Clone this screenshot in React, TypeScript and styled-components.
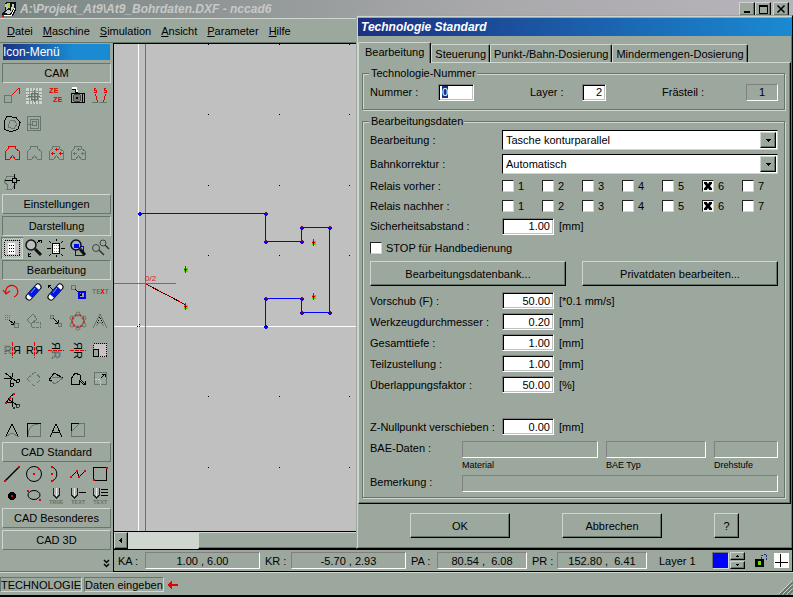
import React, { useEffect, useRef } from "react";
import styled, { createGlobalStyle, css } from "styled-components";

const c = {
  face: "#9ca89e",
  light: "#cfd6d0",
  shade: "#67766c",
  gray: "#808080",
  canvas: "#c0c0c0",
  red: "#e80000",
  blue: "#0000ff",
  navy: "#1c3080",
  sky: "#1a8ad2",
};

const Global = createGlobalStyle`
  *, *::before, *::after { box-sizing: border-box; }
  body { margin: 0; background: ${c.face}; }
  body, button, input, select { font: 11px/14px "Liberation Sans", Arial, sans-serif; color: #000; }
  svg { display: block; }
`;

const raised = css`
  border: 1px solid;
  border-color: ${c.light} #000 #000 ${c.light};
  box-shadow: inset -1px -1px 0 ${c.shade};
`;

/* ---------- main window ---------- */
const Window = styled.div`
  position: relative;
  display: flex;
  flex-direction: column;
  min-height: 100vh;
  background: ${c.face};
`;
const TitleBar = styled.header`
  display: flex;
  align-items: center;
  height: 18px;
  padding: 0 4px 0 1px;
  gap: 3px;
  background: linear-gradient(90deg, #7b8784, #a8a8aa 60%, #b8b3bb);
`;
const TitleText = styled.h1`
  flex: 1;
  margin: 0;
  font: italic bold 12px/16px "Liberation Sans", Arial, sans-serif;
  color: #c6c8c7;
`;
const CaptionButtons = styled.div`
  display: flex;
`;
const CaptionButton = styled.button<{ $gap?: boolean }>`
  ${raised}
  width: 16px;
  height: 14px;
  padding: 0;
  display: grid;
  place-items: center;
  background: ${c.face};
  margin-left: ${(p) => (p.$gap ? "2px" : "0")};
`;
const MenuBar = styled.nav`
  display: flex;
  align-items: center;
  gap: 10px;
  height: 24px;
  padding: 0 7px;
  border-top: 1px solid ${c.light};
`;
const MenuItem = styled.button`
  border: 0;
  padding: 0;
  background: none;
`;
const Body = styled.div`
  flex: 1;
  display: flex;
  border-top: 1px solid ${c.shade};
`;

/* ---------- icon sidebar ---------- */
const Sidebar = styled.aside`
  display: flex;
  flex-direction: column;
  flex: 0 0 113px;
  padding: 1px 2px 3px 1px;
  border-right: 1px solid ${c.shade};
  border-bottom: 1px solid ${c.shade};
`;
const SidebarTitle = styled.h2`
  margin: 0 1px 2px 2px;
  padding: 0;
  font: 12px/16px "Liberation Sans", Arial, sans-serif;
  color: #fff;
  background: linear-gradient(90deg, ${c.navy}, ${c.sky} 65%);
`;
const SectionButton = styled.button<{ $open?: boolean }>`
  height: 20px;
  margin: 1px 0 1px 1px;
  padding: 0;
  background: ${c.face};
  border: 1px solid;
  border-color: ${(p) =>
    p.$open ? `${c.shade} ${c.light} ${c.light} ${c.shade}` : `${c.light} ${c.shade} ${c.shade} ${c.light}`};
`;
const IconGroup = styled.div`
  display: flex;
  flex-direction: column;
  gap: 7px;
`;
const IconGrid = styled.div`
  display: grid;
  grid-template-columns: repeat(5, 22px);
`;
const IconButton = styled.button<{ $pressed?: boolean }>`
  width: 22px;
  height: 22px;
  padding: 0;
  border: 0;
  background: none;
  ${(p) =>
    p.$pressed &&
    css`
      background: repeating-conic-gradient(${c.light} 0 25%, ${c.face} 0 50%) 0 0 / 2px 2px;
      box-shadow: inset 1px 1px 0 ${c.shade}, inset -1px -1px 0 ${c.light};
    `}
`;
const MoreButton = styled.button`
  align-self: flex-end;
  margin-top: auto;
  padding: 0;
  border: 0;
  background: none;
`;

/* ---------- drawing area ---------- */
const Main = styled.main`
  flex: 1;
  min-width: 0;
  display: flex;
  flex-direction: column;
  margin-left: -1px;
  border-left: 1px solid #000;
  border-top: 1px solid #000;
`;
const Canvas = styled.div`
  flex: 1;
  background: ${c.canvas};
  display: grid;
  overflow: hidden;
`;
const ScrollBar = styled.div`
  display: flex;
  height: 18px;
  border-top: 1px solid #000;
  background: ${c.light};
`;
const ScrollArrow = styled.button`
  ${raised}
  width: 14px;
  padding: 0;
  display: grid;
  place-items: center;
  background: ${c.face};
`;
const ScrollThumb = styled.div`
  ${raised}
  flex: 1;
  margin-left: 70px;
  background: ${c.face};
`;
const CoordBar = styled.div`
  display: flex;
  align-items: center;
  height: 23px;
  padding: 0 3px 0 4px;
  border: solid #000;
  border-width: 1px 1px 1px 0;
`;
const CoordLabel = styled.span<{ $w: number }>`
  width: ${(p) => p.$w}px;
  white-space: nowrap;
`;
const CoordValue = styled.output<{ $w: number }>`
  width: ${(p) => p.$w}px;
  height: 17px;
  margin-right: 5px;
  text-align: center;
  white-space: pre;
  line-height: 16px;
  border: 1px solid;
  border-color: ${c.gray} #fff #fff ${c.gray};
`;
const LayerName = styled.span`
  flex: 1;
  padding-left: 7px;
`;
const Swatch = styled.button`
  width: 17px;
  height: 17px;
  padding: 0;
  background: ${c.blue};
  border: 1px solid;
  border-color: ${c.shade} ${c.light} ${c.light} ${c.shade};
`;
const Spinner = styled.div`
  display: grid;
  gap: 1px;
  margin: 0 3px 0 1px;
`;
const SpinButton = styled.button`
  ${raised}
  width: 15px;
  height: 8px;
  padding: 0;
  display: grid;
  place-items: center;
  background: ${c.face};
`;
const ToolButton = styled.button`
  padding: 0;
  border: 0;
  background: none;
  margin-left: 6px;
`;
const StatusBar = styled.footer`
  display: flex;
  align-items: center;
  gap: 2px;
  height: 25px;
  border-top: 1px solid ${c.light};
  border-bottom: 2px solid #000;
`;
const StatusCell = styled.span`
  height: 15px;
  line-height: 14px;
  border: 1px solid;
  border-color: ${c.shade} ${c.light} ${c.light} ${c.shade};
`;
const Grip = styled.span`
  margin-left: auto;
  align-self: flex-end;
`;

/* ---------- dialog ---------- */
const Dialog = styled.section`
  position: absolute;
  top: 15px;
  left: 356px;
  right: 0;
  padding: 1px;
  background: ${c.face};
  border: 1px solid;
  border-color: ${c.face} #000 #000 ${c.face};
  box-shadow: inset 1px 1px 0 ${c.light}, inset -1px -1px 0 ${c.shade};
`;
const DialogTitle = styled.h2`
  margin: 1px 0 0;
  padding: 0 3px;
  font: italic bold 12px/18px "Liberation Sans", Arial, sans-serif;
  color: #fff;
  background: linear-gradient(90deg, ${c.navy}, ${c.sky});
`;
const Tabs = styled.div`
  display: flex;
  align-items: flex-end;
  height: 26px;
  padding-top: 5px;
`;
const Tab = styled.button<{ $active?: boolean }>`
  height: ${(p) => (p.$active ? 21 : 18)}px;
  padding: 0 ${(p) => (p.$active ? 6 : 3)}px ${(p) => (p.$active ? 3 : 0)}px;
  white-space: nowrap;
  background: ${c.face};
  border: solid;
  border-width: 1px 1px 0 1px;
  border-color: ${c.light} #000 ${c.light} ${c.light};
  border-radius: 2px 2px 0 0;
  box-shadow: inset -1px 0 0 ${c.shade};
  margin-bottom: ${(p) => (p.$active ? "-1px" : "0")};
`;
const TabPanel = styled.div`
  ${raised}
  padding: 3px 5px 5px 3px;
`;
const Group = styled.fieldset<{ $last?: boolean }>`
  min-width: 0;
  margin: 0 0 ${(p) => (p.$last ? 0 : 4)}px;
  padding: 0 6px 5px 7px;
  border: 1px solid ${c.shade};
  box-shadow: 1px 1px 0 ${c.light}, inset 1px 1px 0 ${c.light};
`;
const Legend = styled.legend`
  margin-left: -1px;
  padding: 0 1px 0 2px;
  line-height: 14px;
  background: ${c.face};
`;
const NumberRow = styled.div`
  display: grid;
  grid-template-columns: 68px 92px 52px 80px 1fr 32px;
  align-items: center;
  height: 24px;
`;
const Row = styled.div<{ $h: number }>`
  display: grid;
  grid-template-columns: 132px minmax(0, 1fr);
  align-items: center;
  height: ${(p) => p.$h}px;
`;
const Inline = styled.div`
  display: flex;
  align-items: center;
  gap: 5px;
`;
const Field = styled.input<{ $w: number }>`
  width: ${(p) => p.$w}px;
  height: 17px;
  padding: 0 3px;
  background: #fff;
  border: 1px solid;
  border-color: ${c.gray} #fff #fff ${c.gray};
  box-shadow: inset 1px 1px 0 #000, inset -1px -1px 0 ${c.canvas};
  text-align: right;
  outline: 0;
  border-radius: 0;
  &::selection {
    background: ${c.navy};
    color: #fff;
  }
`;
const LeftField = styled(Field)`
  text-align: left;
`;
const FlatField = styled.input`
  width: 100%;
  min-width: 0;
  height: 17px;
  padding: 0 3px;
  text-align: center;
  background: ${c.face};
  border: 1px solid;
  border-color: ${c.gray} #fff #fff ${c.gray};
`;
const SelectBox = styled.div`
  display: grid;
  grid-template-columns: 1fr 16px;
  height: 20px;
  padding: 1px;
  background: #fff;
  border: 1px solid;
  border-color: #000 ${c.light} ${c.light} #000;
`;
const Select = styled.select`
  grid-area: 1 / 1 / 2 / 3;
  appearance: none;
  width: 100%;
  padding: 0 2px;
  border: 0;
  background: none;
  outline: 0;
`;
const SelectArrow = styled.span`
  ${raised}
  grid-area: 1 / 2;
  display: grid;
  place-items: center;
  background: ${c.face};
  pointer-events: none;
`;
const Checks = styled.div`
  display: grid;
  grid-template-columns: repeat(7, 40px);
`;
const CheckLabel = styled.label`
  display: flex;
  align-items: center;
  gap: 4px;
`;
const Check = styled.input`
  appearance: none;
  display: grid;
  place-content: center;
  width: 12px;
  height: 12px;
  margin: 0;
  background: #fff;
  border: 1px solid;
  border-color: #222 ${c.light} ${c.light} #222;
  &:checked::before {
    content: "";
    width: 8px;
    height: 8px;
    background: #000;
    clip-path: polygon(0 0, 35% 0, 50% 25%, 65% 0, 100% 0, 100% 20%, 75% 50%, 100% 80%, 100% 100%, 65% 100%, 50% 75%, 35% 100%, 0 100%, 0 80%, 25% 50%, 0 20%);
  }
`;
const StopRow = styled.div`
  display: flex;
  align-items: center;
  height: 24px;
`;
const PushButton = styled.button`
  ${raised}
  height: 25px;
  padding: 0;
  background: ${c.face};
`;
const WideButtons = styled.div`
  display: grid;
  grid-template-columns: 1fr 1fr;
  gap: 16px;
  margin: 1px 0 4px;
`;
const Spacer = styled.div`
  height: 21px;
`;
const BaeRow = styled.div`
  display: grid;
  grid-template-columns: 84px 136px 100px minmax(0, 1fr);
  column-gap: 8px;
  margin-top: 4px;
`;
const Caption = styled.label`
  font-size: 9px;
  line-height: 14px;
`;
const RemarkRow = styled.div`
  display: grid;
  grid-template-columns: 92px minmax(0, 1fr);
  margin-top: 3px;
`;
const DialogButtons = styled.div`
  display: grid;
  grid-template-columns: 100px 100px 25px;
  column-gap: 52px;
  padding: 9px 52px 9px;
`;

/* ---------- icons ---------- */
const G = c.shade;
const R = c.red;

const node = (x: number, y: number, fill = R) => <rect key={`${x},${y}`} x={x - 1} y={y - 1} width="2" height="2" fill={fill} />;

const HOUSE = "M7.5 4.5h7v2l4 3v8h-4l-3-4-3 4h-4v-8l3-3z";
const plus = (x: number, y: number, col: string) => (
  <path d={`M${x - 1} ${y + 0.5}h4M${x + 0.5} ${y - 1}v3`} stroke={col} />
);
const drillHoles = (col: string) => (
  <>
    {plus(11, 7, col)}
    {plus(7, 11, col)}
    {plus(15, 11, col)}
  </>
);
const eraser = (
  <g shapeRendering="auto">
    <path d="M6 16l9-10" stroke="#000" strokeWidth="7" strokeLinecap="round" />
    <path d="M6 16l9-10" stroke="#fff" strokeWidth="5" strokeLinecap="round" />
    <path d="M7 15l7-8" stroke="#0018e0" strokeWidth="6" />
    <path d="M8 12l4-5" stroke="#8aa0ff" />
  </g>
);
const lens = (x: number, y: number, r: number, fill: string) => (
  <g shapeRendering="auto">
    <circle cx={x} cy={y} r={r} fill={fill} stroke="#111" strokeWidth="1.5" />
    <path d={`M${x + r - 1} ${y + r - 1}L18 18`} stroke="#111" strokeWidth="3" />
  </g>
);
const pencil = (
  <>
    <path d="M8.5 3v7l3 3 3-3v-7" fill="#b0b0b0" stroke="#222" />
    <path d="M11 3v8" stroke="#eee" />
  </>
);
const tiny = (t: React.ReactNode, x: number, y: number, col: string, size = 6) => (
  <text x={x} y={y} fill={col} stroke="none" fontSize={size} fontWeight="bold" fontFamily="Liberation Mono, monospace">
    {t}
  </text>
);
const letter = (t: string, x: number, y: number, dotted?: boolean) => (
  <text x={x} y={y} fill={dotted ? "none" : "#000"} stroke={dotted ? "#222" : "none"} strokeWidth="0.6" strokeDasharray={dotted ? "1 1" : undefined} fontSize="11" fontFamily="Liberation Sans, sans-serif">
    {t}
  </text>
);

type Def = [string, React.ReactNode];

const camRows: Def[][] = [
  [
    ["Startpunkt", <><rect x="3.5" y="11.5" width="7" height="7" stroke={G} /><path d="M11 11l6-6" stroke={R} /><path d="M16.5 4.5h2v5" stroke={R} /></>],
    ["Raster", <><rect x="3" y="4" width="16" height="16" fill={c.light} /><path d="M3 7.5h16M3 10.5h16M3 13.5h16M3 16.5h16M6.5 4v16M9.5 4v16M12.5 4v16M15.5 4v16" stroke="#8f9b92" /><path d="M11.5 6v12M5 12.5h12" stroke={G} /><rect x="8.5" y="9.5" width="6" height="6" stroke={G} /></>],
    ["ZE", <>{tiny("ZE", 4, 9, R, 8)}{tiny("ZE", 8, 18, R, 8)}</>],
    ["Kamera", <><rect x="4.5" y="9.5" width="13" height="9" fill={c.face} stroke="#000" /><path d="M15.5 10v9" stroke="#000" /><circle cx="10" cy="14" r="4" fill="#777" stroke="#444" /><circle cx="10" cy="14" r="1" fill="#000" /><path d="M5 4h4v3h2" stroke="#fff" strokeWidth="2" /><path d="M5 5.5h3v3h3" stroke="#000" /></>],
    ["Werkzeugwechsel", <><path d="M7 4.5h-2v2h2v2h-2M17 4.5h-2v2h2v2h-2M6.5 10l2 8M16.5 10l-2 8" stroke={R} /><path d="M3 18.5h6M10 18.5h8" stroke={G} /></>],
  ],
  [
    ["Kontur", <><path d="M6 3.5l9 1 4 5-2 7-7 2-7-2v-8z" stroke="#000" /><path d="M9 8l4-1 3 4-3 5-6-2z" stroke={G} /></>],
    ["Tasche", <><path d="M4.5 3.5h13v14h-13zM7.5 6.5h8v9h-8zM9.5 8.5h4v4h-4zM4 11.5h6" stroke={G} /></>],
  ],
  [
    ["Teil", <path d={HOUSE} stroke={R} />],
    ["Teil leer", <path d={HOUSE} stroke={G} />],
    ["Teil bohren", <><path d={HOUSE} stroke={G} />{drillHoles(R)}</>],
    ["Bohren", <><path d={HOUSE} stroke={G} />{drillHoles(G)}</>],
  ],
  [["Nullpunkt", <><path d="M6 5h6l4 3-1 5-4 5h-5l1-4-4-3z" stroke={G} /><path d="M4 9.5h15M13.5 3v15" stroke="#000" /><rect x="11.5" y="7.5" width="4" height="4" fill={c.face} stroke="#000" /></>]],
];

const viewRow: Def[] = [
  ["Alles", <><rect x="3" y="4" width="15" height="15" fill="#c8c4c8" /><rect x="3.5" y="3.5" width="15" height="15" stroke="#000" strokeDasharray="1 1" /><rect x="7" y="6" width="7" height="11" fill="#fff" /><path d="M8 8.5h6M8 11.5h6M8 14.5h6" stroke="#000" strokeDasharray="1 1" /></>],
  ["Zoom", <>{lens(8, 8, 5, "#b9bfba")}<path d="M14 6l4-3m-3 0h3v3M8 16l-3 3m0-3v3h3" stroke="#000" /></>],
  ["Ansicht neu", <><rect x="7.5" y="6.5" width="7" height="10" fill="#fff" stroke="#000" /><path d="M9 8.5h5M9 11.5h5M9 14.5h5" stroke="#888" strokeDasharray="1 1" /><path d="M11 2v2M11 18v2M2 11.5h4M16 11.5h4M4 4l2 2M16 6l2-2M4 19l2-2M16 17l2 2" stroke="#000" /></>],
  ["Zoom Fenster", <><rect x="8.5" y="9.5" width="8" height="9" stroke={c.blue} />{lens(9, 8, 5, "#9fb0c8")}<path d="M7 7h5v4h-5z" fill={c.blue} /></>],
  ["Zoom zurück", <g shapeRendering="auto"><circle cx="7" cy="11" r="3.5" stroke="#444" /><path d="M10 13l5 5" stroke="#333" strokeWidth="1.5" /><circle cx="14" cy="6" r="3" stroke="#444" /><path d="M16 8l4 4" stroke="#333" strokeWidth="1.5" /></g>],
];

const editRows: Def[][] = [
  [
    ["Rückgängig", <g shapeRendering="auto"><path d="M5 12a6 6 0 1 1 8 4" stroke={R} strokeWidth="1.2" /><path d="M2 9l3 4 4-3" stroke={R} strokeWidth="1.2" /></g>],
    ["Löschen", eraser],
    ["Teil löschen", <>{eraser}<path d="M3 4l5 5M3 7v-3h3" stroke="#000" /></>],
    ["Kopieren", <><rect x="4.5" y="4.5" width="4" height="4" stroke={G} /><path d="M8 8l6 6m0-3v3h-3" stroke="#000" /><rect x="12" y="11" width="6" height="6" stroke={c.blue} strokeWidth="2" /></>],
    ["Text", tiny(<>TE<tspan fill={R}>X</tspan>T</>, 3, 13, G, 7)],
  ],
  [
    ["Verschieben", <><path d="M4 5.5h5M4 7.5h5M4 9.5h5" stroke={G} strokeDasharray="1 1" /><path d="M8 10l5 4m0-3v3h-3" stroke="#000" /><rect x="13.5" y="13.5" width="4" height="4" stroke={G} /></>],
    ["Drehen", <><path d="M4 10l6-6 4 5-6 5z" stroke={G} /><path d="M8.5 12.5h9v5h-9z" stroke={G} strokeDasharray="3 1" /></>],
    ["Kopie", <><rect x="5.5" y="5.5" width="3" height="3" stroke={G} /><path d="M8 8l5 5m0-3v3h-3" stroke="#000" /><rect x="13.5" y="13.5" width="3" height="3" stroke={G} /></>],
    ["Ring", <g shapeRendering="auto"><circle cx="11" cy="11" r="6" stroke={R} strokeDasharray="3 1" strokeWidth="1.5" />{[[11, 4], [17, 8], [17, 15], [11, 18], [5, 15], [5, 8]].map(([x, y]) => <circle key={`${x}${y}`} cx={x} cy={y} r="2" stroke={G} />)}</g>],
    ["Winkel", <><path d="M4 18l7-14 7 14M7 16l4-4 4 4" stroke={G} /><path d="M8 13l3-6 3 6" stroke="#000" strokeDasharray="1 1" /></>],
  ],
  [
    ["Spiegeln X Kopie", <>{letter("R", 3, 15, true)}{letter("Я", 12, 15)}<path d="M11.5 3v16" stroke={R} strokeDasharray="4 1" /></>],
    ["Spiegeln X", <>{letter("R", 3, 15)}{letter("Я", 12, 15)}<path d="M11.5 3v16" stroke={R} strokeDasharray="4 1" /></>],
    ["Spiegeln Y Kopie", <><g transform="rotate(90 11 11)">{letter("Я", 3, 15)}{letter("R", 12, 15, true)}</g><path d="M3 11.5h16" stroke={R} strokeDasharray="4 1" /></>],
    ["Spiegeln Y", <><g transform="rotate(90 11 11)">{letter("Я", 3, 15)}{letter("R", 12, 15)}</g><path d="M3 11.5h16" stroke={R} strokeDasharray="4 1" /></>],
    ["Skalieren", <><rect x="4.5" y="4.5" width="13" height="13" fill="#c8c4c8" stroke="#000" strokeDasharray="1 1" /><rect x="4.5" y="10.5" width="5" height="7" fill={c.face} stroke="#000" /></>],
  ],
  [
    ["Trimmen", <><path d="M4 5l11 8M12 5l-3 11M3 10l7 1" stroke="#000" /><circle cx="17" cy="13" r="1.5" stroke="#000" /><circle cx="11" cy="17" r="1.5" stroke="#000" /></>],
    ["Öffnen", <path d="M4 11l8-7 6 7-7 7z" stroke={G} strokeDasharray="5 2" />],
    ["Verbinden", <><path d="M4 12l6 4 8-6" stroke={G} /><path d="M4 12l5-7 9 5M4 12l3 0" stroke="#000" /><path d="M7 9l10 1" stroke={G} /></>],
    ["Fläche", <><path d="M4 16v-5l4-6 5 2 1 5 4 4M4 16h8v-4l4 4h2v-3" stroke="#000" /></>],
    ["Strecken", <><rect x="5.5" y="4.5" width="12" height="12" stroke={G} /><path d="M12 10l4-4m-3 0h3v3" stroke="#000" /><path d="M6 11.5h5v5" stroke={c.light} strokeDasharray="2 1" /></>],
  ],
];
const cutRow: Def[] = [
  ["Teilen", <><path d="M5 13l4-6 4-3" stroke="#000" /><path d="M7 9l9 6M11 8l1 9M6 12h6" stroke="#000" /><circle cx="17" cy="16" r="1.5" stroke="#333" /><circle cx="13" cy="18" r="1" stroke="#333" />{node(5, 13)}{node(9, 8)}{node(13, 4)}</>],
];
const cornerRow: Def[] = [
  ["Ecke", <><path d="M4 18l7-4 7 4" stroke={G} /><path d="M5 17l6-12 6 12" stroke="#000" /></>],
  ["Runden", <><path d="M4.5 4.5h13v13h-13z" stroke={G} /><path d="M4.5 18v-13.5h13.5" stroke="#000" /><path d="M5 16q0-10 10-11" stroke={G} /></>],
  ["Spitze", <path d="M5 18l6-13 6 13M8 13.5h6" stroke="#000" />],
  ["Fase", <><path d="M4.5 4.5h13v13h-13z" stroke={G} /><path d="M4.5 12v-7.5h7" stroke="#000" /><path d="M5 12l7-7" stroke={G} /></>],
];

const cadRows: Def[] = [
  ["Linie", <><path d="M4 18l14-14" stroke="#000" strokeWidth="1.5" shapeRendering="auto" />{node(4, 18)}{node(18, 4)}</>],
  ["Kreis", <><circle cx="11" cy="11" r="7.5" stroke="#000" shapeRendering="auto" />{node(11, 11)}{node(16, 6)}</>],
  ["Bogen", <><path d="M7 4a7.5 7.5 0 0 1 0 14" stroke="#000" shapeRendering="auto" />{node(7, 4)}{node(7, 11)}{node(7, 18)}</>],
  ["Polylinie", <><path d="M4 14l6-6 2 6 6-6" stroke="#000" />{node(4, 14)}{node(10, 8)}{node(12, 14)}{node(18, 8)}</>],
  ["Rechteck", <><rect x="4.5" y="4.5" width="13" height="13" stroke="#000" />{node(5, 17)}{node(18, 5)}</>],
  ["Punkt", <><circle cx="11" cy="11" r="4" fill="#000" />{node(11, 11)}</>],
  ["Ellipse", <><ellipse cx="11" cy="10" rx="6" ry="4.5" stroke="#000" shapeRendering="auto" />{node(5, 6)}{node(17, 15)}</>],
  ["TrueType-Text", <>{pencil}{tiny("TRUE", 4, 19, G)}</>],
  ["Text einzeilig", <><g transform="translate(-4 0)">{pencil}</g><path d="M12 7.5h7" stroke="#000" />{tiny("TEXT", 4, 19, G)}</>],
  ["Text mehrzeilig", <><g transform="translate(-4 0)">{pencil}</g><path d="M12 4.5h7M12 7.5h7M12 10.5h7" stroke="#000" />{tiny("TEXT", 4, 19, G)}</>],
];

const Icons = ({ items, pressed }: { items: Def[]; pressed?: number }) => (
  <IconGrid>
    {items.map(([name, art], i) => (
      <IconButton key={name} aria-label={name} $pressed={pressed === i}>
        <svg width="22" height="22" fill="none" shapeRendering="crispEdges" aria-hidden="true">
          {art}
        </svg>
      </IconButton>
    ))}
  </IconGrid>
);

const Arrow = ({ d, size = 7 }: { d: string; size?: number }) => (
  <svg width={size} height={size} viewBox="0 0 7 7" shapeRendering="crispEdges" aria-hidden="true">
    <path d={d} />
  </svg>
);
const DOWN = "M1 2h5v1h-1v1h-1v1h-1v-1h-1v-1h-1z";

/* ---------- drawing ---------- */
const gridX = [94, 165, 235, 306, 376, 447, 517, 588, 658];
const gridY = [0, 70, 141, 211, 352, 423];
const corners = [[25, 169], [151, 169], [151, 197], [187, 197], [187, 183], [215, 183], [215, 268], [187, 268], [187, 254], [151, 254], [151, 282]];

const Drawing = () => (
  <svg width="100%" height="100%" fill="none" shapeRendering="crispEdges" role="img" aria-label="Zeichnung">
    {gridX.flatMap((x) => gridY.map((y) => <rect key={`${x}-${y}`} x={x} y={y} width="1" height="1" fill="#000" />))}
    <path d="M24.5 0v2000M0 282.5h2000" stroke="#fff" />
    <path d="M31.5 0v2000M0 239.5h62" stroke="#b040b0" />
    <path d="M25 169.5h126.5v28h36v-14h28v85h-28v-14h-36v28" stroke={c.blue} />
    {corners.map(([x, y]) => (
      <g key={`${x}-${y}`}>
        <path d={`M${x - 1} ${y + 0.5}h4M${x + 0.5} ${y - 1}v4`} stroke={c.blue} strokeWidth="2" />
        {x > 25 && y < 282 && <rect x={x} y={y - 1} width="2" height="2" fill="#900020" />}
      </g>
    ))}
    <path d="M25.5 280v4M23 282.5h4" stroke={c.blue} strokeDasharray="1 1" />
    <path d="M32 240l40 21" stroke="#200" />
    <path d="M32 240l40 21" stroke={R} strokeDasharray="1 2" />
    {[[71, 225], [71, 262], [199, 198], [199, 252]].map(([x, y]) => (
      <g key={`${x}-${y}`}>
        <rect x={x - 1} y={y - 1} width="4" height="4" fill="#60d000" />
        <path d={`M${x - 1} ${y + 0.5}h3M${x + 0.5} ${y - 3}v7`} stroke={R} />
        <rect x={x} y={y} width="1" height="2" fill="#000" />
      </g>
    ))}
    <text x="31" y="237" fill="#d02020" fontSize="8" fontFamily="Liberation Sans, sans-serif">0/2</text>
  </svg>
);

const menus = ["Datei", "Maschine", "Simulation", "Ansicht", "Parameter", "Hilfe"];
const coords: [string, number, string, number][] = [
  ["KA :", 27, "1.00 , 6.00", 115],
  ["KR :", 26, "-5.70 , 2.93", 115],
  ["PA :", 26, "80.54 ,  6.08", 90],
  ["PR :", 25, "152.80 ,  6.41", 90],
];
const values: [string, string, string][] = [
  ["Vorschub (F) :", "50.00", "[*0.1 mm/s]"],
  ["Werkzeugdurchmesser :", "0.20", "[mm]"],
  ["Gesamttiefe :", "1.00", "[mm]"],
  ["Teilzustellung :", "1.00", "[mm]"],
  ["Überlappungsfaktor :", "50.00", "[%]"],
];

const ValueRow = ({ h, label, value, unit }: { h: number; label: string; value: string; unit: string }) => (
  <Row $h={h}>
    <label htmlFor={label}>{label}</label>
    <Inline>
      <Field id={label} $w={52} defaultValue={value} />
      <span>{unit}</span>
    </Inline>
  </Row>
);
const SelectRow = ({ label, option }: { label: string; option: string }) => (
  <Row $h={24}>
    <label htmlFor={label}>{label}</label>
    <SelectBox>
      <Select id={label}>
        <option>{option}</option>
      </Select>
      <SelectArrow>
        <Arrow d={DOWN} />
      </SelectArrow>
    </SelectBox>
  </Row>
);
const RelayRow = ({ label }: { label: string }) => (
  <Row $h={20} role="group" aria-label={label}>
    <span>{label}</span>
    <Checks>
      {[1, 2, 3, 4, 5, 6, 7].map((n) => (
        <CheckLabel key={n}>
          <Check type="checkbox" defaultChecked={n === 6} />
          {n}
        </CheckLabel>
      ))}
    </Checks>
  </Row>
);

const TechnologyDialog = () => {
  const first = useRef<HTMLInputElement>(null);
  useEffect(() => {
    first.current?.focus();
    first.current?.select();
  }, []);
  return (
    <Dialog role="dialog" aria-label="Technologie Standard">
      <DialogTitle>Technologie Standard</DialogTitle>
      <Tabs role="tablist">
        {["Bearbeitung", "Steuerung", "Punkt-/Bahn-Dosierung", "Mindermengen-Dosierung"].map((t, i) => (
          <Tab key={t} role="tab" aria-selected={i === 0} $active={i === 0}>
            {t}
          </Tab>
        ))}
      </Tabs>
      <TabPanel>
        <Group>
          <Legend>Technologie-Nummer</Legend>
          <NumberRow>
            <label htmlFor="nummer">Nummer :</label>
            <LeftField id="nummer" ref={first} $w={36} defaultValue="0" />
            <label htmlFor="layer">Layer :</label>
            <Field id="layer" $w={24} defaultValue="2" />
            <label htmlFor="teil">Frästeil :</label>
            <FlatField id="teil" readOnly value="1" />
          </NumberRow>
        </Group>
        <Group $last>
          <Legend>Bearbeitungsdaten</Legend>
          <SelectRow label="Bearbeitung :" option="Tasche konturparallel" />
          <SelectRow label="Bahnkorrektur :" option="Automatisch" />
          <RelayRow label="Relais vorher :" />
          <RelayRow label="Relais nachher :" />
          <ValueRow h={20} label="Sicherheitsabstand :" value="1.00" unit="[mm]" />
          <StopRow>
            <CheckLabel>
              <Check type="checkbox" />
              STOP für Handbedienung
            </CheckLabel>
          </StopRow>
          <WideButtons>
            <PushButton>Bearbeitungsdatenbank...</PushButton>
            <PushButton>Privatdaten bearbeiten...</PushButton>
          </WideButtons>
          {values.map(([l, v, u]) => (
            <ValueRow key={l} h={21} label={l} value={v} unit={u} />
          ))}
          <Spacer />
          <ValueRow h={21} label="Z-Nullpunkt verschieben :" value="0.00" unit="[mm]" />
          <BaeRow>
            <span>BAE-Daten :</span>
            <FlatField id="material" readOnly />
            <FlatField id="typ" readOnly />
            <FlatField id="stufe" readOnly />
            <span />
            <Caption htmlFor="material">Material</Caption>
            <Caption htmlFor="typ">BAE Typ</Caption>
            <Caption htmlFor="stufe">Drehstufe</Caption>
          </BaeRow>
          <RemarkRow>
            <label htmlFor="bemerkung">Bemerkung :</label>
            <FlatField id="bemerkung" readOnly />
          </RemarkRow>
        </Group>
      </TabPanel>
      <DialogButtons>
        <PushButton>OK</PushButton>
        <PushButton>Abbrechen</PushButton>
        <PushButton>?</PushButton>
      </DialogButtons>
    </Dialog>
  );
};

export default function App() {
  return (
    <Window>
      <Global />
      <TitleBar>
        <svg width="16" height="16" fill="none" shapeRendering="crispEdges" aria-hidden="true">
          <path d="M4 2l2-1h9v8l-3 6h-11v-3l3-3z" fill="#111" />
          <path d="M4 3l3-1v5l-2 2z" fill="#b8c4bc" />
          <path d="M8 2v5" stroke="#a0e020" strokeWidth="2" />
          <path d="M11 3h2v5l-3 2zM3 12l4-3 4 1-2 3z" fill="#c8d0ca" />
          <path d="M1 14.5h9l4-7" stroke="#fff" />
          {node(2, 15)}
        </svg>
        <TitleText>A:\Projekt_At9\At9_Bohrdaten.DXF - nccad6</TitleText>
        <CaptionButtons>
          <CaptionButton aria-label="Minimieren">
            <svg width="9" height="8" shapeRendering="crispEdges"><path d="M1 6h6v2h-6z" /></svg>
          </CaptionButton>
          <CaptionButton aria-label="Maximieren">
            <svg width="9" height="9" fill="none" shapeRendering="crispEdges"><path d="M.5 8.5v-8h8v8zM0 1.5h9" stroke="#000" /></svg>
          </CaptionButton>
          <CaptionButton aria-label="Schließen" $gap>
            <svg width="8" height="8" fill="none"><path d="M.5.5l7 7M7.5.5l-7 7" stroke="#000" strokeWidth="1.5" /></svg>
          </CaptionButton>
        </CaptionButtons>
      </TitleBar>
      <MenuBar>
        {menus.map((m) => (
          <MenuItem key={m}>
            <u>{m[0]}</u>
            {m.slice(1)}
          </MenuItem>
        ))}
      </MenuBar>
      <Body>
        <Sidebar>
          <SidebarTitle>Icon-Menü</SidebarTitle>
          <SectionButton $open>CAM</SectionButton>
          <IconGroup>
            {camRows.map((r, i) => <Icons key={i} items={r} />)}
          </IconGroup>
          <SectionButton>Einstellungen</SectionButton>
          <SectionButton $open>Darstellung</SectionButton>
          <Icons items={viewRow} pressed={0} />
          <SectionButton $open>Bearbeitung</SectionButton>
          <IconGroup>
            {editRows.slice(0, 3).map((r, i) => <Icons key={i} items={r} />)}
            <div>
              <Icons items={editRows[3]} />
              <Icons items={cutRow} />
            </div>
            <Icons items={cornerRow} />
          </IconGroup>
          <SectionButton>CAD Standard</SectionButton>
          <Icons items={cadRows} />
          <SectionButton>CAD Besonderes</SectionButton>
          <SectionButton>CAD 3D</SectionButton>
          <MoreButton aria-label="Mehr">
            <svg width="9" height="9" fill="none"><path d="M2 1l2.5 2.5L7 1M2 5l2.5 2.5L7 5" stroke="#000" strokeWidth="1.5" /></svg>
          </MoreButton>
        </Sidebar>
        <Main>
          <Canvas><Drawing /></Canvas>
          <ScrollBar>
            <ScrollArrow aria-label="Nach links"><Arrow d="M4 1v5h-1v-1h-1v-1h-1v-1h1v-1h1v-1z" /></ScrollArrow>
            <ScrollThumb />
          </ScrollBar>
          <CoordBar>
            {coords.map(([l, lw, v, w]) => (
              <React.Fragment key={l}>
                <CoordLabel $w={lw}>{l}</CoordLabel>
                <CoordValue $w={w}>{v}</CoordValue>
              </React.Fragment>
            ))}
            <LayerName>Layer 1</LayerName>
            <Swatch aria-label="Layerfarbe" />
            <Spinner>
              <SpinButton aria-label="Höher"><svg width="3" height="2" shapeRendering="crispEdges"><path d="M1 0h1v1h1v1H0V1h1z" /></svg></SpinButton>
              <SpinButton aria-label="Tiefer"><svg width="3" height="2" shapeRendering="crispEdges"><path d="M0 0h3v1H2v1H1V1H0z" /></svg></SpinButton>
            </Spinner>
            <ToolButton aria-label="Sperre">
              <svg width="14" height="13" fill="none" shapeRendering="crispEdges">
                <path d="M7.5 5v-3l2-1.5h3v5" stroke={c.navy} strokeDasharray="2 1" />
                <rect x="1" y="5" width="9" height="8" fill="#000" />
                <rect x="4" y="7" width="3" height="4" fill="#60e000" />
              </svg>
            </ToolButton>
            <ToolButton aria-label="Fadenkreuz">
              <svg width="15" height="15" fill="none" shapeRendering="crispEdges">
                <rect width="15" height="15" fill="#fff" />
                <path d="M1 9.5h13M6.5 1v13" stroke="#000" />
              </svg>
            </ToolButton>
          </CoordBar>
        </Main>
      </Body>
      <StatusBar>
        <StatusCell>TECHNOLOGIE</StatusCell>
        <StatusCell>Daten eingeben</StatusCell>
        <svg width="14" height="9" fill="none" shapeRendering="crispEdges" aria-hidden="true">
          <path d="M4 5h8" stroke={R} strokeWidth="2" />
          <path d="M6 1v8l-5-4z" fill={R} />
        </svg>
        <Grip>
          <svg width="14" height="14" fill="none"><path d="M1 14L14 1M5 14l9-9M9 14l5-5" stroke={c.shade} strokeWidth="2" /><path d="M0 13L13 0M4 13l9-9M8 13l5-5" stroke={c.light} /></svg>
        </Grip>
      </StatusBar>
      <TechnologyDialog />
    </Window>
  );
}
